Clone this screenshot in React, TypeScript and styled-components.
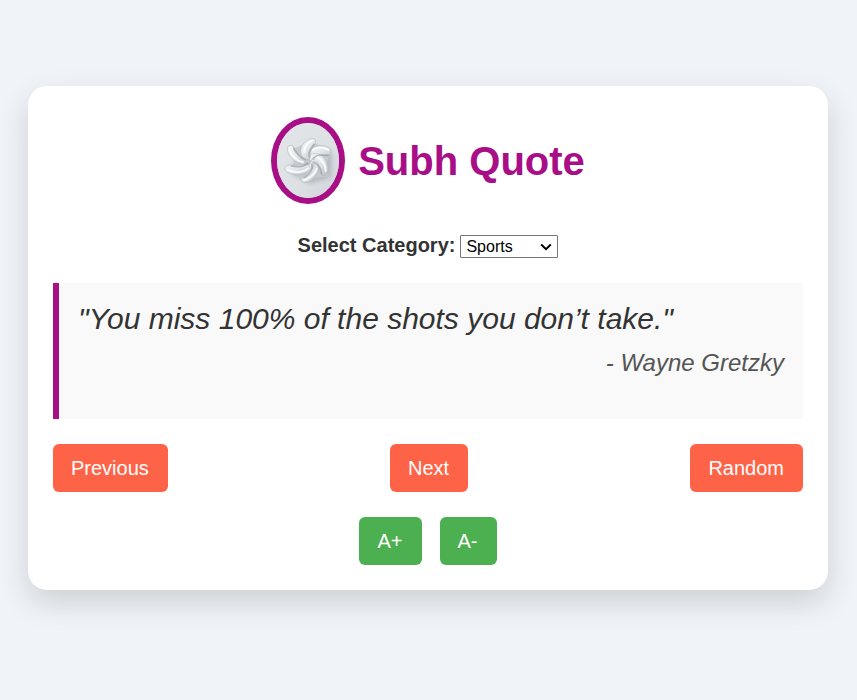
import React, { useState } from "react";
import styled, { createGlobalStyle } from "styled-components";

const GlobalStyle = createGlobalStyle`
  * { box-sizing: border-box; }
  body {
    margin: 0;
    background: #f0f4f8;
    color: #333;
    font-family: "Liberation Sans", Arial, sans-serif;
  }
`;

const Page = styled.main`
  min-height: 100vh;
  display: flex;
  align-items: center;
  justify-content: center;
  padding: 24px 29px 48px 28px;
`;

const Card = styled.section`
  width: 100%;
  max-width: 800px;
  display: flex;
  flex-direction: column;
  gap: 25px;
  padding: 31px 25px 25px;
  background: #fff;
  border-radius: 19px;
  box-shadow: 0 12px 30px rgba(0, 0, 0, 0.15);
`;

const Header = styled.header`
  display: flex;
  align-items: center;
  justify-content: center;
  gap: 13px;
`;

const Logo = styled.svg`
  width: 74px;
  height: 87px;
  border: 6px solid #a80f87;
  border-radius: 50%;
  background: #dfe2e5;
`;

const Title = styled.h1`
  margin: 0;
  font-size: 40px;
  line-height: 44px;
  color: #a80f87;
`;

const CategoryRow = styled.div`
  display: flex;
  align-items: flex-end;
  justify-content: center;
  gap: 5px;
  padding-top: 3px;
`;

const CategoryLabel = styled.label`
  font-size: 20px;
  line-height: 26px;
  font-weight: bold;
`;

const SelectWrap = styled.span`
  position: relative;
  display: flex;
`;

const CategorySelect = styled.select`
  appearance: none;
  width: 98px;
  height: 23px;
  padding: 0 20px 0 5px;
  border: 1px solid #767676;
  border-radius: 1px;
  background-color: #fff;
  color: #000;
  font-family: inherit;
  font-size: 16px;
  line-height: 21px;
`;

const SelectArrow = styled.svg`
  position: absolute;
  right: 6px;
  top: 8px;
  width: 12px;
  height: 8px;
  pointer-events: none;
`;

const Quote = styled.blockquote`
  margin: 0;
  min-height: 136px;
  padding: 19px;
  border-left: 6px solid #a80f87;
  background: #f9f9f9;
  font-style: italic;
`;

const QuoteText = styled.p<{ $size: number }>`
  margin: 0 0 13px;
  font-size: ${(p) => p.$size}px;
  line-height: 34px;
`;

const Author = styled.footer`
  text-align: right;
  font-size: 24px;
  line-height: 28px;
  color: #555;
`;

const ButtonRow = styled.div<{ $spread?: boolean }>`
  display: flex;
  justify-content: ${(p) => (p.$spread ? "space-between" : "center")};
  gap: 18px;
`;

const Button = styled.button<{ $tone: "nav" | "size" }>`
  padding: 12px 19px 12px 18px;
  border: 0;
  border-radius: 6px;
  background: ${(p) => (p.$tone === "nav" ? "#ff6347" : "#4caf50")};
  color: #fff;
  font-family: inherit;
  font-size: 20px;
  line-height: 24px;
  cursor: pointer;
`;

type Entry = { text: string; author: string };

const quotes: Record<string, Entry[]> = {
  Sports: [{ text: "You miss 100% of the shots you don’t take.", author: "Wayne Gretzky" }],
  Inspiration: [{ text: "Well begun is half done.", author: "Aristotle" }],
};

function FlowerLogo() {
  return (
    <Logo viewBox="52 39 186 225" preserveAspectRatio="none" role="img" aria-label="Subh Quote logo">
      <defs>
        <linearGradient id="wall" x1="0" y1="0" x2="1" y2="1">
          <stop offset="0" stopColor="#e3e6e8" />
          <stop offset="0.6" stopColor="#dde1e4" />
          <stop offset="1" stopColor="#d0d4d9" />
        </linearGradient>
        <linearGradient id="petal" x1="0" y1="0" x2="0.8" y2="1">
          <stop offset="0" stopColor="#f5f6f7" />
          <stop offset="0.55" stopColor="#e4e7e9" />
          <stop offset="1" stopColor="#bfc4ca" />
        </linearGradient>
        <filter id="soft" x="-20%" y="-20%" width="140%" height="140%">
          <feGaussianBlur stdDeviation="6" />
        </filter>
        <filter id="edge" x="-10%" y="-10%" width="120%" height="120%">
          <feGaussianBlur stdDeviation="1.5" />
        </filter>
      </defs>
      <rect x="52" y="39" width="186" height="225" fill="url(#wall)" />
      <path d="M112 125L165 105L218 132L214 202L150 222L98 192Z" fill="#929aa3" opacity="0.5" filter="url(#soft)" />
      <path d="M99 118L126 106L168 101L213 126L201 158L208 200L174 202L130 213L91 184L104 156Z" fill="#c6cbd0" filter="url(#edge)" />
      <g fill="url(#petal)" stroke="#b4b9c0" strokeWidth="2" strokeLinejoin="round">
        <path d="M142 132C154 108 188 98 212 117C219 128 208 138 196 137C174 134 156 139 149 151C143 147 139 139 142 132Z" />
        <path d="M156 132C184 125 206 148 206 184C204 199 190 202 183 192C178 170 166 156 148 153C145 144 148 135 156 132Z" />
        <path d="M167 150C187 167 177 200 148 215C132 221 118 215 127 203C147 191 156 174 150 156C155 147 163 144 167 150Z" />
        <path d="M163 167C150 193 113 203 82 187C70 178 74 164 91 165C116 169 137 164 147 151C158 153 165 159 163 167Z" />
        <path d="M148 164C124 169 100 155 87 132C77 112 87 101 101 109C108 127 123 146 148 147C154 153 153 160 148 164Z" />
        <path d="M141 149C119 141 117 115 134 98C148 85 161 82 168 90C170 104 147 120 152 140C151 148 146 151 141 149Z" />
      </g>
      <g fill="none" stroke="#8e959d" strokeWidth="5" strokeLinecap="round" opacity="0.6" filter="url(#edge)">
        <path d="M163 103C155 115 144 123 148 140" />
        <path d="M205 136C181 133 166 138 160 146" />
        <path d="M186 190C182 170 173 161 162 156" />
        <path d="M133 203C151 192 161 178 157 163" />
        <path d="M95 168C118 173 133 169 143 160" />
        <path d="M102 115C109 128 119 143 137 149" />
      </g>
      <g fill="none" stroke="#fff" strokeWidth="6" strokeLinecap="round" opacity="0.85" filter="url(#edge)">
        <path d="M133 127C132 112 144 98 158 92" />
        <path d="M161 119C174 111 192 111 205 119" />
        <path d="M175 142C191 153 198 169 198 183" />
        <path d="M171 176C165 193 150 205 133 211" />
        <path d="M83 179C109 192 133 186 147 175" />
        <path d="M90 119C96 139 112 152 130 157" />
      </g>
    </Logo>
  );
}

export default function App() {
  const [category, setCategory] = useState("Sports");
  const [index, setIndex] = useState(0);
  const [size, setSize] = useState(30);
  const list = quotes[category];
  const quote = list[index % list.length];
  const move = (step: number) => setIndex((i) => (i + step + list.length) % list.length);

  return (
    <>
      <GlobalStyle />
      <Page>
        <Card>
          <Header>
            <FlowerLogo />
            <Title>Subh Quote</Title>
          </Header>
          <CategoryRow>
            <CategoryLabel htmlFor="category">Select Category:</CategoryLabel>
            <SelectWrap>
              <CategorySelect
                id="category"
                value={category}
                onChange={(e) => {
                  setCategory(e.target.value);
                  setIndex(0);
                }}
              >
                {Object.keys(quotes).map((name) => (
                  <option key={name}>{name}</option>
                ))}
              </CategorySelect>
              <SelectArrow viewBox="0 0 12 8" aria-hidden="true">
                <path d="M1.2 1.5L6 6.2L10.8 1.5" fill="none" stroke="#000" strokeWidth="2" />
              </SelectArrow>
            </SelectWrap>
          </CategoryRow>
          <Quote>
            <QuoteText $size={size}>"{quote.text}"</QuoteText>
            <Author>- {quote.author}</Author>
          </Quote>
          <ButtonRow $spread>
            <Button $tone="nav" onClick={() => move(-1)}>Previous</Button>
            <Button $tone="nav" onClick={() => move(1)}>Next</Button>
            <Button $tone="nav" onClick={() => setIndex(Math.floor(Math.random() * list.length))}>Random</Button>
          </ButtonRow>
          <ButtonRow>
            <Button $tone="size" onClick={() => setSize(size + 2)}>A+</Button>
            <Button $tone="size" onClick={() => setSize(Math.max(12, size - 2))}>A-</Button>
          </ButtonRow>
        </Card>
      </Page>
    </>
  );
}
